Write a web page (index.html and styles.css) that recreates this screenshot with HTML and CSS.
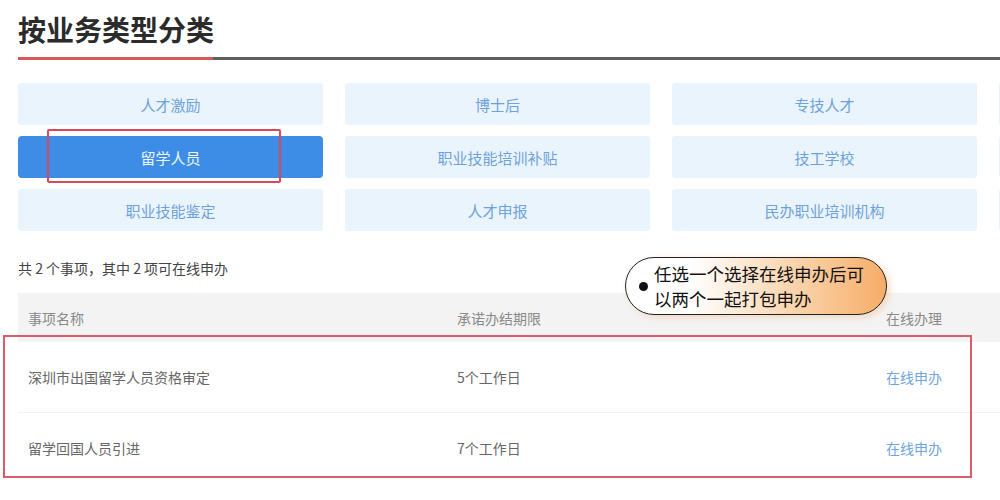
FILE: index.html
```html
<!DOCTYPE html>
<html lang="zh-CN">
<head>
  <meta charset="UTF-8" />
  <meta name="viewport" content="width=device-width, initial-scale=1" />
  <title>按业务类型分类</title>
  <link rel="stylesheet" href="styles.css">
</head>
<body>
  <div class="page">
    <h2 class="section-title">按业务类型分类</h2>
    <div class="title-rule"><span class="rule-accent"></span></div>

    <div class="category-grid">
      <a class="category">人才激励</a>
      <a class="category">博士后</a>
      <a class="category">专技人才</a>
      <a class="category"></a>
      <a class="category active">留学人员</a>
      <a class="category">职业技能培训补贴</a>
      <a class="category">技工学校</a>
      <a class="category"></a>
      <a class="category">职业技能鉴定</a>
      <a class="category">人才申报</a>
      <a class="category">民办职业培训机构</a>
      <a class="category"></a>
    </div>

    <p class="summary">共 2 个事项，其中 2 项可在线申办</p>

    <div class="item-table">
      <div class="row head">
        <span>事项名称</span>
        <span>承诺办结期限</span>
        <span>在线办理</span>
      </div>
      <div class="row">
        <span>深圳市出国留学人员资格审定</span>
        <span>5个工作日</span>
        <a class="apply">在线申办</a>
      </div>
      <div class="row">
        <span>留学回国人员引进</span>
        <span>7个工作日</span>
        <a class="apply">在线申办</a>
      </div>
    </div>

    <!-- annotations drawn over the page -->
    <div class="mark mark-category"></div>
    <div class="mark mark-table"></div>
    <div class="note">
      <span class="note-dot"></span>
      <span class="note-text">任选一个选择在线申办后可<br>以两个一起打包申办</span>
    </div>
  </div>
</body>
</html>
```

FILE: styles.css
```css
html, body {
  margin: 0;
  background: #fff;
  overflow: hidden;
}
.page {
  position: relative;
  width: 1000px;
  height: 500px;
  padding: 10px 0 0 18px;
  box-sizing: border-box;
  overflow: hidden;
  font-family: "Noto Sans CJK SC", "Noto Sans", sans-serif;
}
.section-title {
  margin: 0;
  font-size: 28px;
  line-height: 38px;
  font-weight: bold;
  color: #2b2b2b;
}
.title-rule {
  margin-top: 9px;
  height: 3px;
  width: 1000px;
  background: #5e5e5e;
}
.rule-accent {
  display: block;
  width: 195px;
  height: 3px;
  background: #d9575a;
}
.category-grid {
  display: grid;
  grid-template-columns: repeat(4, 305px);
  grid-auto-rows: 42px;
  column-gap: 22px;
  row-gap: 11px;
  margin-top: 23px;
}
.category {
  display: flex;
  align-items: center;
  justify-content: center;
  background: #eaf4fd;
  color: #6ea2da;
  font-size: 15px;
  border-radius: 3px;
  cursor: pointer;
}
.category.active {
  background: #3d8de6;
  color: #eef5fd;
  border-radius: 4px;
}
.summary {
  margin: 27px 0 0;
  font-size: 14px;
  line-height: 20px;
  color: #444;
}
.item-table {
  margin-top: 15px;
  width: 1000px;
  font-size: 14px;
  color: #666;
}
.row {
  display: grid;
  grid-template-columns: 429px 429px 1fr;
  align-items: center;
  height: 70px;
  border-bottom: 1px solid #f0f0f0;
}
.row:last-child {
  border-bottom: none;
}
.row span, .row a {
  padding-left: 10px;
}
.row.head {
  height: 49px;
  background: #f3f3f3;
  color: #8a8a8a;
  border-bottom: none;
}
.apply {
  color: #6fa4e0;
  cursor: pointer;
}
.mark {
  position: absolute;
  border: 2px solid #d8475a;
  box-sizing: border-box;
}
.mark-category {
  left: 47px;
  top: 129px;
  width: 234px;
  height: 54px;
  border-radius: 2px;
}
.mark-table {
  left: 3px;
  top: 335px;
  width: 969px;
  height: 143px;
  border-color: #dc5a6a;
}
.note {
  position: absolute;
  left: 625px;
  top: 257px;
  width: 262px;
  height: 58px;
  box-sizing: border-box;
  display: flex;
  align-items: center;
  padding-left: 13px;
  border: 1.5px solid #222;
  border-radius: 30px;
  background: linear-gradient(to right, #ffffff 25%, #fbd9b5 60%, #f6ad68 100%);
  box-shadow: 3px 2px 6px rgba(240, 160, 90, 0.35);
}
.note-dot {
  width: 9px;
  height: 9px;
  border-radius: 50%;
  background: #111;
  flex: none;
}
.note-text {
  margin-left: 6px;
  font-size: 17.5px;
  line-height: 25px;
  color: #111;
  white-space: nowrap;
}
```
